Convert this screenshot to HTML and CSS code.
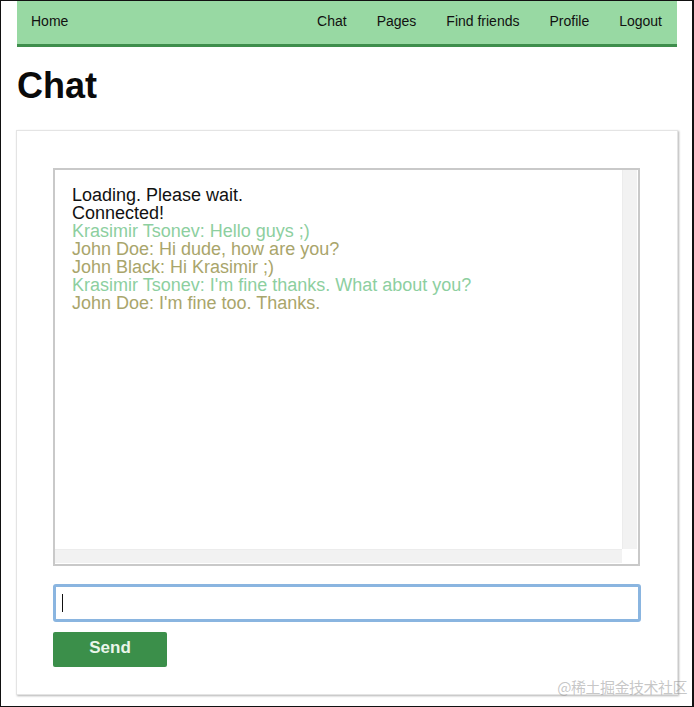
FILE: index.html
```html
<!DOCTYPE html>
<html>
<head>
<meta charset="utf-8">
<title>Chat</title>
<link rel="stylesheet" href="styles.css">
</head>
<body>
<div class="frame">
  <nav class="nav">
    <a class="nav-link nav-home" href="#">Home</a>
    <div class="nav-right">
      <a class="nav-link" href="#">Chat</a>
      <a class="nav-link" href="#">Pages</a>
      <a class="nav-link" href="#">Find friends</a>
      <a class="nav-link" href="#">Profile</a>
      <a class="nav-link" href="#">Logout</a>
    </div>
  </nav>
  <h1 class="title">Chat</h1>
  <section class="card">
    <div class="chatbox">
      <div class="chat-main">
        <div class="messages">
          <div class="msg">Loading. Please wait.</div>
          <div class="msg">Connected!</div>
          <div class="msg msg-green">Krasimir Tsonev: Hello guys ;)</div>
          <div class="msg msg-olive">John Doe: Hi dude, how are you?</div>
          <div class="msg msg-olive">John Black: Hi Krasimir ;)</div>
          <div class="msg msg-green">Krasimir Tsonev: I'm fine thanks. What about you?</div>
          <div class="msg msg-olive">John Doe: I'm fine too. Thanks.</div>
        </div>
        <div class="vbar"></div>
      </div>
      <div class="chat-bottom">
        <div class="hbar"></div>
        <div class="corner"></div>
      </div>
    </div>
    <div class="input"><span class="caret"></span></div>
    <button class="send">Send</button>
  </section>
  <div class="watermark">@稀土掘金技术社区</div>
</div>
</body>
</html>
```

FILE: styles.css
```css
html, body {
  margin: 0;
  padding: 0;
  background: #fff;
}
.frame {
  position: relative;
  box-sizing: border-box;
  width: 694px;
  height: 707px;
  border: 1px solid #111;
  border-right-width: 2px;
  padding: 0 13px 0 16px;
  font-family: "Liberation Sans", Arial, sans-serif;
  color: #111;
  overflow: hidden;
}
.nav {
  display: flex;
  justify-content: space-between;
  width: 660px;
  height: 43px;
  box-sizing: content-box;
  background: #98d9a3;
  border-bottom: 3px solid #3e8e4c;
}
.nav-right {
  display: flex;
}
.nav-link {
  display: block;
  padding: 12px 15px 0;
  font-size: 14px;
  line-height: 16px;
  color: #111;
  text-decoration: none;
}
.nav-home {
  padding-left: 14px;
}
.title {
  margin: 19px 0 24px 0;
  font-size: 36px;
  line-height: 40px;
  font-weight: bold;
  color: #0a0a0a;
}
.card {
  box-sizing: border-box;
  width: 662px;
  height: 565px;
  margin-left: -1px;
  border: 1px solid #e4e4e4;
  box-shadow: 1px 1px 2px rgba(0, 0, 0, 0.3);
  padding: 37px 36px 0 36px;
  display: flex;
  flex-direction: column;
  align-items: flex-start;
}
.chatbox {
  box-sizing: border-box;
  width: 587px;
  height: 398px;
  border: 2px solid #c9c9c9;
  display: flex;
  flex-direction: column;
}
.chat-main {
  flex: 1;
  display: flex;
}
.messages {
  flex: 1;
  padding: 16px 0 0 17px;
  font-size: 18px;
  line-height: 18px;
  color: #111;
}
.msg-green {
  color: #8dcf9f;
}
.msg-olive {
  color: #a9a56b;
}
.vbar {
  width: 14px;
  margin-right: 1px;
  background-color: #f2f2f2;
  background-image: radial-gradient(#dcdcdc 0.6px, transparent 0.7px);
  background-size: 2px 2px;
  border-left: 1px solid #ececec;
}
.chat-bottom {
  display: flex;
  height: 14px;
  margin-bottom: 1px;
}
.hbar {
  flex: 1;
  background-color: #f2f2f2;
  background-image: radial-gradient(#dcdcdc 0.6px, transparent 0.7px);
  background-size: 2px 2px;
  border-top: 1px solid #ececec;
}
.corner {
  width: 16px;
  background: #fff;
}
.input {
  box-sizing: border-box;
  width: 588px;
  height: 38px;
  margin-top: 18px;
  border: 3px solid #8ab5e0;
  border-radius: 3px;
  padding: 7px 0 0 6px;
  background: #fff;
}
.caret {
  display: block;
  width: 1px;
  height: 18px;
  background: #111;
}
.send {
  box-sizing: border-box;
  width: 114px;
  height: 35px;
  margin-top: 10px;
  border: 0;
  border-radius: 2px;
  background: #3b8f4a;
  color: #eaf6ea;
  font-family: "Liberation Sans", Arial, sans-serif;
  font-weight: bold;
  font-size: 17px;
  padding: 0 0 4px;
}
.watermark {
  position: absolute;
  right: 5px;
  bottom: 11px;
  font-family: "Noto Sans CJK SC", sans-serif;
  font-size: 15px;
  line-height: 16px;
  letter-spacing: -0.5px;
  color: rgba(150, 150, 150, 0.55);
}
```
